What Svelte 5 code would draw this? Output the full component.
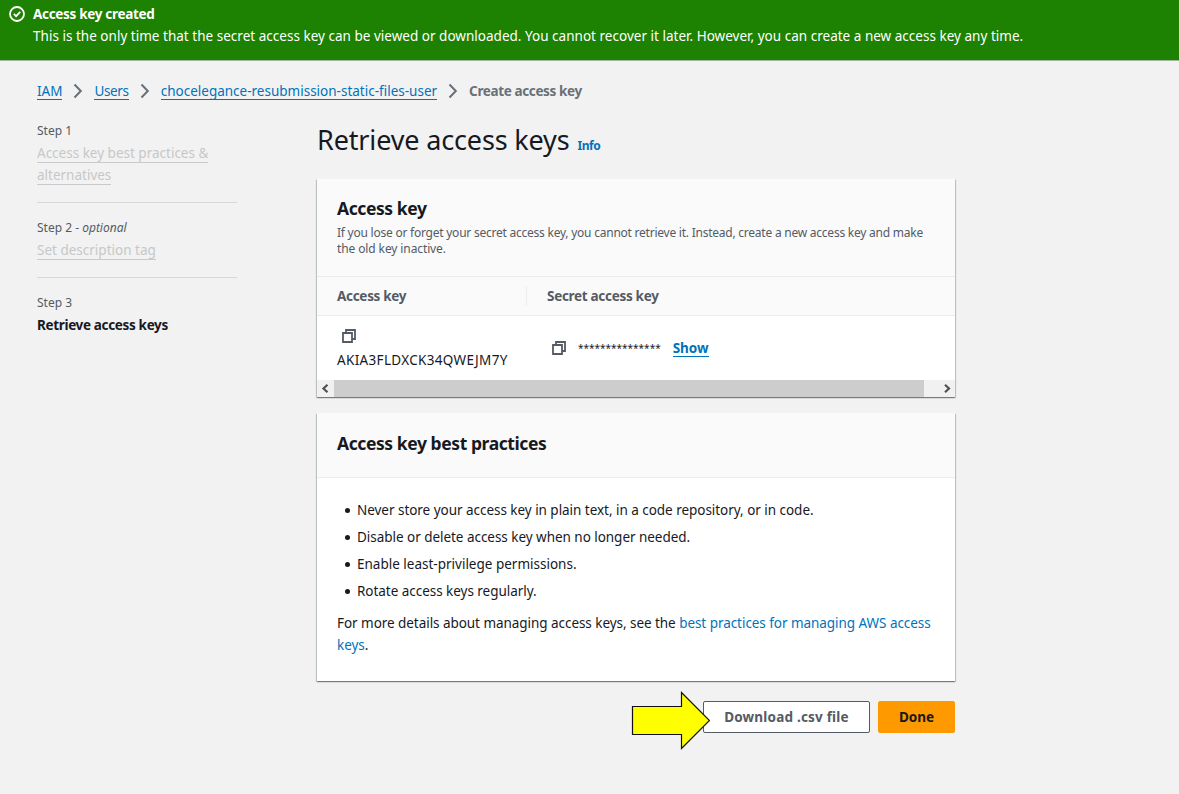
<script>
  const practices = [
    { text: 'Never store your access key in plain text, in a code repository, or in code.', cls: 'p1' },
    { text: 'Disable or delete access key when no longer needed.', cls: 'p2' },
    { text: 'Enable least-privilege permissions.', cls: 'p3' },
    { text: 'Rotate access keys regularly.', cls: 'p4' }
  ];
</script>

{#snippet chevron()}
  <svg class="chevron" width="10" height="16" viewBox="0 0 10 16"><path d="M1.5 1.5 7.8 8 1.5 14.5" fill="none" stroke="#687078" stroke-width="2" /></svg>
{/snippet}

{#snippet copy()}
  <svg class="copy" width="16" height="16" viewBox="0 0 16 16"><path d="M2 5h9v9H2zM5 5V2h9v9h-3" fill="none" stroke="#545b64" stroke-width="1.8" /></svg>
{/snippet}

<div class="page">
  <header class="flash">
    <svg class="ok" width="16" height="16" viewBox="0 0 16 16" fill="none" stroke="#fff" stroke-width="1.8"><circle cx="8" cy="8" r="7" /><path d="m4.8 7.9 2.3 2.3 4.1-4.4" /></svg>
    <div>
      <div class="flash-title"><span class="t1">Access key created</span></div>
      <div><span class="t2">This is the only time that the secret access key can be viewed or downloaded. You cannot recover it later. However, you can create a new access key any time.</span></div>
    </div>
  </header>

  <nav class="crumbs">
    <a href="#iam" class="c1">IAM</a>{@render chevron()}
    <a href="#users" class="c2">Users</a>{@render chevron()}
    <a href="#user" class="c3">chocelegance-resubmission-static-files-user</a>{@render chevron()}
    <span class="current">Create access key</span>
  </nav>

  <div class="body">
    <aside>
      <div class="step">
        <small>Step 1</small>
        <div><span class="disabled">Access key best practices &amp;<br />alternatives</span></div>
      </div>
      <div class="step">
        <small>Step 2 - <i>optional</i></small>
        <div><span class="disabled">Set description tag</span></div>
      </div>
      <div class="step">
        <small>Step 3</small>
        <div><b class="s3">Retrieve access keys</b></div>
      </div>
    </aside>

    <main>
      <div class="heading"><h1>Retrieve access keys</h1><a href="#info" class="info">Info</a></div>

      <section class="panel">
        <div class="panel-head first">
          <h2>Access key</h2>
          <p class="desc"><span class="d1">If you lose or forget your secret access key, you cannot retrieve it. Instead, create a new access key and make</span><br /><span class="d2">the old key inactive.</span></p>
        </div>
        <div class="thead">
          <div class="th">Access key</div>
          <div class="th">Secret access key</div>
        </div>
        <div class="row">
          <div class="key">{@render copy()}<span class="k1">AKIA3FLDXCK34QWEJM7Y</span></div>
          <div class="secret">{@render copy()}<span class="stars">***************</span><a href="#show" class="show">Show</a></div>
        </div>
        <div class="scroll">
          <svg width="17" height="17" viewBox="0 0 17 17"><path d="M10.5 4.8 6.5 8.5l4 3.7" fill="none" stroke="#505050" stroke-width="2.2" /></svg>
          <div class="thumb"></div>
          <svg width="17" height="17" viewBox="0 0 17 17"><path d="m7 4.8 4 3.7-4 3.7" fill="none" stroke="#505050" stroke-width="2.2" /></svg>
        </div>
      </section>

      <section class="panel second">
        <div class="panel-head"><h2>Access key best practices</h2></div>
        <div class="content">
          <ul>
            {#each practices as p}
              <li><span class={p.cls}>{p.text}</span></li>
            {/each}
          </ul>
          <p class="more">For more details about managing access keys, see the <a href="#docs">best practices for managing AWS access<br />keys</a>.</p>
        </div>
      </section>

      <div class="actions">
        <div class="dl">
          <button class="download">Download .csv file</button>
          <svg class="arrow" width="80" height="60" viewBox="0 0 80 60"><path d="M2.5 16.5h49v-14l28 28-28 28v-14h-49z" fill="#ff0" stroke="#111" stroke-width="1.2" /></svg>
        </div>
        <button class="done">Done</button>
      </div>
    </main>
  </div>
</div>

<style>
  :global(body) { margin: 0; background: #f2f2f2; }
  .page {
    box-sizing: border-box; width: 1179px; height: 794px; overflow: hidden; background: #f2f2f2;
    font: 13.5px/22px "Noto Sans", "Open Sans", sans-serif; color: #16191f;
  }
  h1, h2, p, ul { margin: 0; padding: 0; }
  a { color: #0073bb; text-decoration: none; }
  svg { display: block; flex: none; }
  span, a, b, small, h1, h2, p { white-space: nowrap; }

  .flash { display: flex; gap: 8px; height: 57px; padding: 3px 9px 0; background: #1d8102; color: #fff; border-bottom: 1px solid #a3b59f; }
  .ok { margin-top: 3px; }
  .flash-title { font-weight: 700; letter-spacing: -.31px; }
  .t2 { letter-spacing: .019px; }

  .crumbs { display: flex; align-items: center; height: 22px; margin: 19px 0 0 37px; }
  .crumbs a, .show { padding-top: 2px; line-height: 15px; border-bottom: 1px solid #0073bb; }
  .c2 { letter-spacing: -.35px; }
  .chevron { margin: 0 11px; }
  .current { color: #687078; font-weight: 700; letter-spacing: -.37px; }

  .body { display: flex; gap: 80px; padding: 21px 0 0 37px; }
  aside { width: 200px; }
  .step { border-bottom: 1px solid #d5d9d9; padding-bottom: 16px; margin-bottom: 17px; }
  .step:last-child { border: 0; }
  small { display: block; font-size: 12px; line-height: 16px; margin-bottom: 3px; color: #545b64; }
  .disabled { color: #c6c8c8; border-bottom: 1px solid #c8cacb; }
  .s3 { letter-spacing: -.34px; }

  main { width: 638px; }
  .heading { display: flex; align-items: baseline; gap: 8px; height: 36px; }
  h1 { font-size: 27px; line-height: 34px; font-weight: 400; letter-spacing: -.15px; }
  .info { font-size: 12px; font-weight: 700; letter-spacing: -.45px; }

  .panel {
    margin-top: 20px; background: #fff;
    box-shadow: 0 1px 1px rgba(0,28,36,.3), 1px 1px 1px rgba(0,28,36,.18), -1px 1px 1px rgba(0,28,36,.18);
  }
  .panel.second { margin-top: 16px; }
  .panel-head { box-sizing: border-box; height: 65px; padding: 19px 20px 0; background: #fafafa; border-bottom: 1px solid #eaeded; }
  .panel-head.first { height: 98px; padding-top: 18px; }
  h2 { font-size: 17.5px; line-height: 22px; font-weight: 700; letter-spacing: -.42px; }
  .desc { margin-top: 6px; font-size: 12px; line-height: 16px; color: #545b64; }
  .d1 { letter-spacing: -.235px; }
  .d2 { letter-spacing: -.11px; }
  .thead { display: flex; align-items: center; box-sizing: border-box; height: 39px; background: #fafafa; border-bottom: 1px solid #eaeded; }
  .th { box-sizing: border-box; padding-left: 20px; line-height: 20px; color: #545b64; font-weight: 700; letter-spacing: -.3px; }
  .th:first-child { width: 210px; border-right: 1px solid #eaeded; }
  .row { display: flex; height: 64px; }
  .key { box-sizing: border-box; width: 210px; padding: 12px 0 0 20px; }
  .key .copy { margin: 0 0 5px 4px; }
  .k1 { display: block; letter-spacing: .33px; }
  .secret { display: flex; align-items: center; padding-left: 24px; }
  .stars { margin-left: 11px; font-size: 10px; }
  .show { margin-left: 12px; font-weight: 700; }
  .scroll { display: flex; height: 17px; background: #f1f1f1; }
  .thumb { width: 590px; margin-right: 14px; background: #cdcdcd; }

  .content { box-sizing: border-box; height: 203px; padding: 21px 20px 0; }
  ul { list-style: none; }
  li { display: flex; align-items: center; height: 22px; margin-bottom: 5px; }
  li::before { content: ""; width: 5px; height: 5px; margin: 1px 7px 0 8px; border-radius: 50%; background: #16191f; }
  .p1, .p2, .p4 { letter-spacing: -.035px; }
  .more { margin-top: 10px; letter-spacing: -.05px; }

  .actions { display: flex; justify-content: flex-end; gap: 8px; margin-top: 20px; }
  .dl { position: relative; }
  button { box-sizing: border-box; display: block; height: 32px; padding: 0; border-radius: 2px; font: 700 13.5px/20px "Noto Sans", sans-serif; }
  .download { width: 167px; border: 1px solid #545b64; background: #fff; color: #545b64; letter-spacing: .2px; }
  .done { width: 77px; border: 1px solid #ff9900; background: #ff9900; color: #16191f; }
  .arrow { position: absolute; left: -73px; top: -11px; }
</style>
